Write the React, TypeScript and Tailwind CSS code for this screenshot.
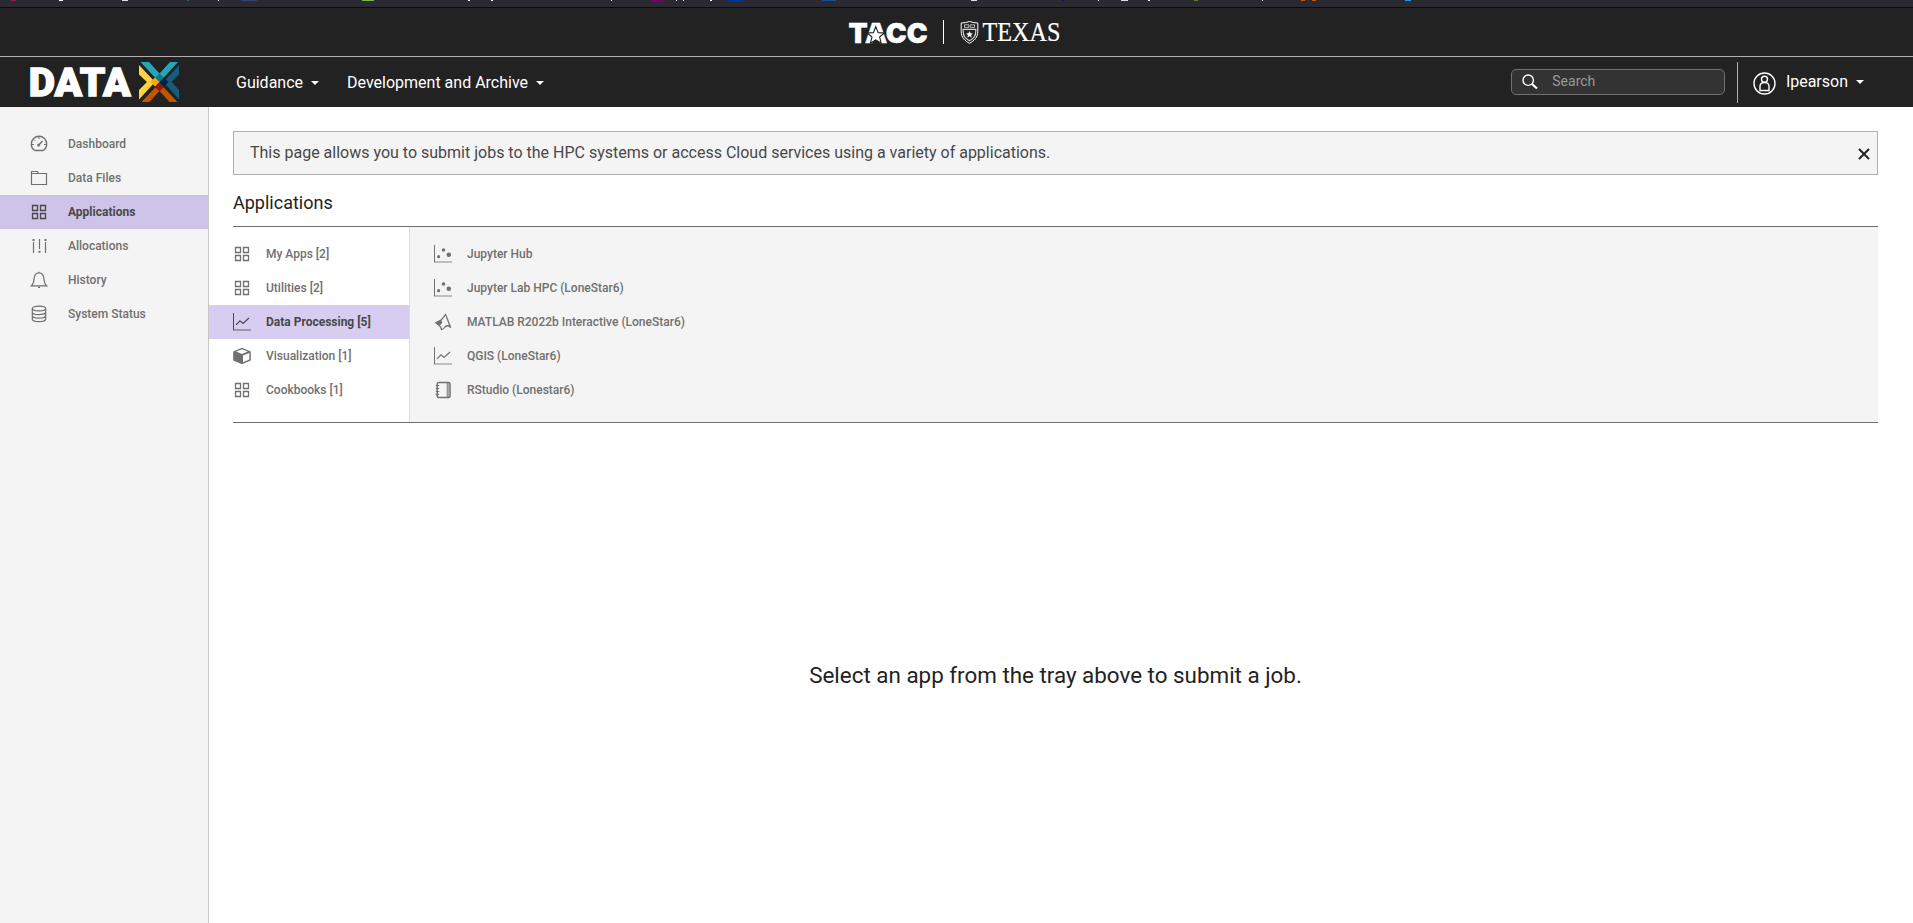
import type { ReactNode } from "react";

const marks: [number, number, string][] = [
  [11, 5, "#a0145f"], [59, 4, "#fff"], [122, 6, "#ddd"], [187, 2, "#2a6b3c"], [218, 1, "#fff"],
  [241, 16, "#33446b"], [362, 12, "#79b548"], [468, 2, "#fff"], [491, 2, "#fff"], [611, 1, "#fff"],
  [652, 11, "#80006a"], [676, 1, "#fff"], [683, 1, "#fff"], [710, 2, "#fff"], [727, 17, "#0033a0"],
  [822, 14, "#17508f"], [971, 6, "#ddd"], [1062, 2, "#1a0f66"], [1098, 1, "#fff"], [1121, 7, "#ddd"],
  [1148, 2, "#fff"], [1194, 4, "#5b8520"], [1262, 1, "#fff"], [1301, 4, "#c05a12"], [1312, 4, "#c05a12"],
  [1405, 6, "#0fa0d8"],
];

type IconProps = { children: ReactNode };
const Icon = ({ children }: IconProps) => (
  <svg width="18" height="18" viewBox="0 0 18 18" fill="none" stroke="currentColor" strokeWidth="1" className="shrink-0">
    {children}
  </svg>
);

const icons: Record<string, ReactNode> = {
  dashboard: (
    <Icon>
      <path d="M5 15.5H13C15.5 14 16.9 11.5 16.6 8.7A7.6 7.4 0 0 0 1.4 8.7C1.1 11.5 2.5 14 5 15.5Z" strokeWidth="1.4" />
      <path d="M9 2v2M2 9.5h2M14 9.5h2M4.2 4.8l1 1" />
      <path d="M12.5 6L9 9.8" strokeWidth="1.4" />
      <circle cx="8.7" cy="10" r="1.5" fill="currentColor" stroke="none" />
    </Icon>
  ),
  folder: (
    <Icon>
      <path d="M1.5 15.5V2.5H7.5L8.5 4.5H16.5V15.5Z" strokeWidth="1.2" />
      <path d="M1.5 4.5H8.5" />
    </Icon>
  ),
  grid: (
    <Icon>
      <path d="M2.5 2.5h5v5h-5zM10.5 2.5h5v5h-5zM2.5 10.5h5v5h-5zM10.5 10.5h5v5h-5z" strokeWidth="1.3" />
    </Icon>
  ),
  sliders: (
    <Icon>
      <path d="M3.5 5v11M9.5 2v10M15.5 5v11" strokeWidth="1.2" />
      <path d="M2.5 3h2M8.5 14.8h2M14.5 3h2" strokeWidth="2" />
    </Icon>
  ),
  bell: (
    <Icon>
      <path d="M1.5 14.8C3.5 13 3.8 11 4 8C4.3 4 6 1.8 9 1.8S13.7 4 14 8C14.2 11 14.5 13 16.5 14.8Z" strokeWidth="1.2" />
      <path d="M9 .8v1" />
      <path d="M8 16.3h2" strokeWidth="1.6" />
    </Icon>
  ),
  database: (
    <Icon>
      <g strokeWidth="1.2">
        <ellipse cx="9" cy="3.5" rx="6.7" ry="2.4" />
        <path d="M2.3 3.5v10.8c0 1.3 3 2.4 6.7 2.4s6.7-1.1 6.7-2.4V3.5M2.3 7.2c0 1.3 3 2.4 6.7 2.4s6.7-1.1 6.7-2.4M2.3 10.8c0 1.3 3 2.4 6.7 2.4s6.7-1.1 6.7-2.4" />
      </g>
    </Icon>
  ),
  line: (
    <Icon>
      <path d="M0.5 0v17" />
      <path d="M0 17h18" strokeWidth="1.6" opacity=".5" />
      <path d="M3 11.8L7 7.8L10 10.5L16 5" strokeWidth="1.2" />
    </Icon>
  ),
  scatter: (
    <Icon>
      <path d="M0.5 0v17" />
      <path d="M0 17h18" strokeWidth="1.6" opacity=".5" />
      <g fill="currentColor" stroke="none">
        <circle cx="4.6" cy="11.7" r="1.6" />
        <circle cx="9.5" cy="5" r="1.8" />
        <circle cx="14.8" cy="9.8" r="2.3" />
      </g>
    </Icon>
  ),
  cube: (
    <Icon>
      <path d="M9 .8L17.8 4.4V13.4L9 17.2L.2 13.4V4.4Z" fill="currentColor" stroke="none" />
      <path d="M9 2.2L14.8 4.6L9 6.9L3.2 4.6Z" fill="#fff" stroke="none" />
      <path d="M10 8.6L16.3 6V12.4L10 15.2Z" fill="#fff" stroke="none" />
    </Icon>
  ),
  matlab: (
    <Icon>
      <path d="M1.3 9.8L6.8 7L7.8 10L5 12.5Z" fill="currentColor" />
      <path d="M6.8 7.2C9 6 10 3 11.5 1.5C13 4 14.5 10.5 16.8 14.5C14.5 12 12.5 12.5 11 14C10 15.5 9 16.5 7.5 16.5C7 14.5 6 13 5 12.3" strokeWidth="1.3" />
    </Icon>
  ),
  notebook: (
    <Icon>
      <rect x="3.2" y="1.5" width="12.8" height="15" rx="1.5" strokeWidth="1.5" />
      <path d="M13.7 2v14" strokeWidth="2.2" opacity=".7" />
      <path d="M1.8 4.5h3.4M1.8 7.5h3.4M1.8 10.5h3.4M1.8 13.5h3.4" />
    </Icon>
  ),
};

type Item = { icon: string; label: string; active?: boolean };

const sections: Item[] = [
  { icon: "dashboard", label: "Dashboard" },
  { icon: "folder", label: "Data Files" },
  { icon: "grid", label: "Applications", active: true },
  { icon: "sliders", label: "Allocations" },
  { icon: "bell", label: "History" },
  { icon: "database", label: "System Status" },
];
const categories: Item[] = [
  { icon: "grid", label: "My Apps [2]" },
  { icon: "grid", label: "Utilities [2]" },
  { icon: "line", label: "Data Processing [5]", active: true },
  { icon: "cube", label: "Visualization [1]" },
  { icon: "grid", label: "Cookbooks [1]" },
];
const apps: Item[] = [
  { icon: "scatter", label: "Jupyter Hub" },
  { icon: "scatter", label: "Jupyter Lab HPC (LoneStar6)" },
  { icon: "matlab", label: "MATLAB R2022b Interactive (LoneStar6)" },
  { icon: "line", label: "QGIS (LoneStar6)" },
  { icon: "notebook", label: "RStudio (Lonestar6)" },
];

const Caret = () => (
  <svg width="8" height="4" viewBox="0 0 8 4" className="shrink-0 fill-white">
    <path d="M0 0h8L4 4z" />
  </svg>
);

const TaccLogo = () => (
  <svg width="80" height="24" viewBox="0 0 80 24" fill="#fff" className="overflow-visible">
    <text x="0.5" y="22.5" fontFamily="Inter" fontWeight="900" fontSize="27" stroke="#fff" strokeWidth=".5" textLength="79" lengthAdjust="spacingAndGlyphs">TACC</text>
    <path d="M27.8 6.6L30.2 12.6L36.4 13L31.6 17L33.2 23.2L27.8 19.8L22.4 23.2L24 17L19.2 13L25.4 12.6Z" stroke="#222" strokeWidth="1.1" />
  </svg>
);

const TexasLogo = () => (
  <svg width="101" height="24" viewBox="0 0 101 24" fill="none" stroke="#fff" className="overflow-visible">
    <path d="M1.2 3Q5 3 9.5 1.5Q14 3 17.8 3V11.5C17.8 17.5 14 21 9.5 23.3C5 21 1.2 17.5 1.2 11.5Z" strokeWidth="1" />
    <path d="M3.2 9.3H15.8V11.5C15.8 16 13 19.1 9.5 20.7C6 19.1 3.2 16 3.2 11.5Z" strokeWidth="1.2" opacity=".8" />
    <path d="M4.5 4.8h4.3v2.6H4.5zM10.2 4.8h4.3v2.6h-4.3z" strokeWidth=".9" opacity=".75" />
    <path d="M9.5 11l1 2.3 2.5.2-1.9 1.6.6 2.5-2.2-1.3-2.2 1.3.6-2.5L6 13.5l2.5-.2z" fill="#fff" stroke="none" />
    <text x="22.5" y="21" fill="#fff" stroke="#fff" strokeWidth=".2" fontFamily="Liberation Serif" fontSize="26.5" textLength="78" lengthAdjust="spacingAndGlyphs">TEXAS</text>
  </svg>
);

const DataXLogo = () => (
  <svg width="152" height="42" viewBox="0 0 152 42" className="overflow-visible">
    <text x="-0.3" y="34.5" fill="#fff" stroke="#fff" strokeWidth="1.3" fontFamily="Roboto" fontWeight="900" fontSize="39.5" textLength="102" lengthAdjust="spacingAndGlyphs">DATA</text>
    <g transform="translate(.5 0)">
      <path d="M111 1H119.5L130 12.5L140.5 1H148.5L130 21.5Z" fill="#26a6b5" />
      <path d="M109.5 4V13.5L117.5 21L109.5 29V38.5L125.5 21Z" fill="#ffd23f" />
      <path d="M149.5 4V13.5L142 21L149.5 29V38.5L134 21Z" fill="#165c7d" />
      <path d="M112 41H120L130 30L140 41H148L130 22Z" fill="#bf5700" />
      <path d="M110.5 2.5L125.5 18.5M149 2.5L134 18.5M110.5 40L125.5 24M149 40L134 24" stroke="#222" strokeWidth="1.3" />
      <path d="M130 12.5L134.5 17L130 21.5L125.5 17Z" fill="#0d7686" />
      <path d="M125.5 16.5L130 21L125.5 25.5L121 21Z" fill="#ffa60a" />
      <path d="M134.5 16.5L139 21L134.5 25.5L130 21Z" fill="#00224e" />
      <path d="M130 22L134.5 26L130 30.5L125.5 26Z" fill="#8e1b04" />
    </g>
  </svg>
);

export default function App() {
  return (
    <div className="flex h-[923px] w-full flex-col overflow-hidden bg-white font-[Roboto,sans-serif]">
      <div className="h-2 shrink-0 border-b border-[#0c0c0d] bg-[#2b2a33]">
        <svg width="1913" height="1" className="block" shapeRendering="crispEdges">
          {marks.map(([x, w, c]) => <rect key={x} x={x} width={w} height="1" fill={c} />)}
        </svg>
      </div>

      <div className="flex h-[49px] shrink-0 items-center border-b border-[#afafaf] bg-[#222] pl-[848px]">
        <TaccLogo />
        <div className="ml-[15px] h-6 w-px bg-white" />
        <div className="ml-4"><TexasLogo /></div>
      </div>

      <nav className="flex h-[50px] shrink-0 items-center bg-[#222] text-base text-white">
        <div className="ml-[29px]"><DataXLogo /></div>
        <a className="ml-[55px] flex items-center gap-2 pt-0.5">Guidance <Caret /></a>
        <a className="ml-7 flex items-center gap-2 pt-0.5">Development and Archive <Caret /></a>
        <div className="ml-auto flex h-[26px] w-[214px] items-center rounded-[5px] border border-[#707070] bg-[#333] pl-[10px] text-sm text-[#999]">
          <svg width="16" height="16" viewBox="0 0 16 16" fill="none" stroke="#fff">
            <circle cx="6.2" cy="6.2" r="5.2" strokeWidth="1.4" />
            <path d="M10 10L15 14.5" strokeWidth="2.2" />
          </svg>
          <span className="ml-[14px] pb-0.5">Search</span>
        </div>
        <div className="ml-3 h-[41px] w-px bg-[#afafaf]" />
        <svg width="23" height="23" viewBox="0 0 23 23" fill="none" stroke="#fff" strokeWidth="1.4" className="mt-0.5 ml-[15px]">
          <circle cx="11.5" cy="11.5" r="10.5" />
          <circle cx="11.5" cy="7.2" r="3" />
          <path d="M7 18.5V14.5C7 12 8.5 10.5 11.5 10.5S16 12 16 14.5V18.5Z" />
        </svg>
        <a className="mr-[49px] ml-[10px] flex items-center gap-2">lpearson <Caret /></a>
      </nav>

      <div className="flex min-h-0 flex-1">
        <aside className="w-[209px] shrink-0 border-r border-[#c6c6c6] bg-[#f4f4f4] pt-5">
          {sections.map((s) => (
            <a key={s.label} className={`flex h-[34px] items-center gap-5 pl-[30px] text-xs ${s.active ? "bg-[#cec4e9] font-bold text-[#484848]" : "font-medium text-[#707070]"}`}>
              {icons[s.icon]}
              {s.label}
            </a>
          ))}
        </aside>

        <main className="flex min-w-0 flex-1 flex-col pt-6">
          <div className="mr-[35px] ml-6 flex h-11 shrink-0 items-center justify-between border border-[#afafaf] bg-[#f4f4f4] pr-[7px] pl-4 text-base text-[#484848]">
            <p>This page allows you to submit jobs to the HPC systems or access Cloud services using a variety of applications.</p>
            <svg width="12" height="12" viewBox="0 0 12 12" stroke="#222" strokeWidth="2" className="mt-0.5">
              <path d="M1 1l10 10M11 1L1 11" />
            </svg>
          </div>
          <h1 className="mt-[14px] ml-6 h-[37px] text-lg text-[#222]">Applications</h1>
          <div className="mr-[35px] ml-6 h-px shrink-0 bg-[#707070]" />
          <div className="mr-[35px] flex h-[195px] shrink-0">
            <div className="w-[201px] border-r border-[#dbdbdb] pt-[10px]">
              {categories.map((c) => (
                <a key={c.label} className={`flex h-[34px] items-center gap-[15px] pl-6 text-xs ${c.active ? "bg-[#d6cdf1] font-bold text-[#484848]" : "font-medium text-[#707070]"}`}>
                  {icons[c.icon]}
                  {c.label}
                </a>
              ))}
            </div>
            <div className="flex-1 bg-[#f4f4f4] pt-[10px] text-xs font-medium text-[#707070]">
              {apps.map((a) => (
                <a key={a.label} className="flex h-[34px] items-center gap-[15px] pl-6">
                  {icons[a.icon]}
                  {a.label}
                </a>
              ))}
            </div>
          </div>
          <div className="mr-[35px] ml-6 h-px shrink-0 bg-[#707070]" />
          <div className="mr-[35px] ml-6 flex flex-1 items-center justify-center pt-[5px] text-[22.4px] text-[#222]">
            Select an app from the tray above to submit a job.
          </div>
        </main>
      </div>
    </div>
  );
}
